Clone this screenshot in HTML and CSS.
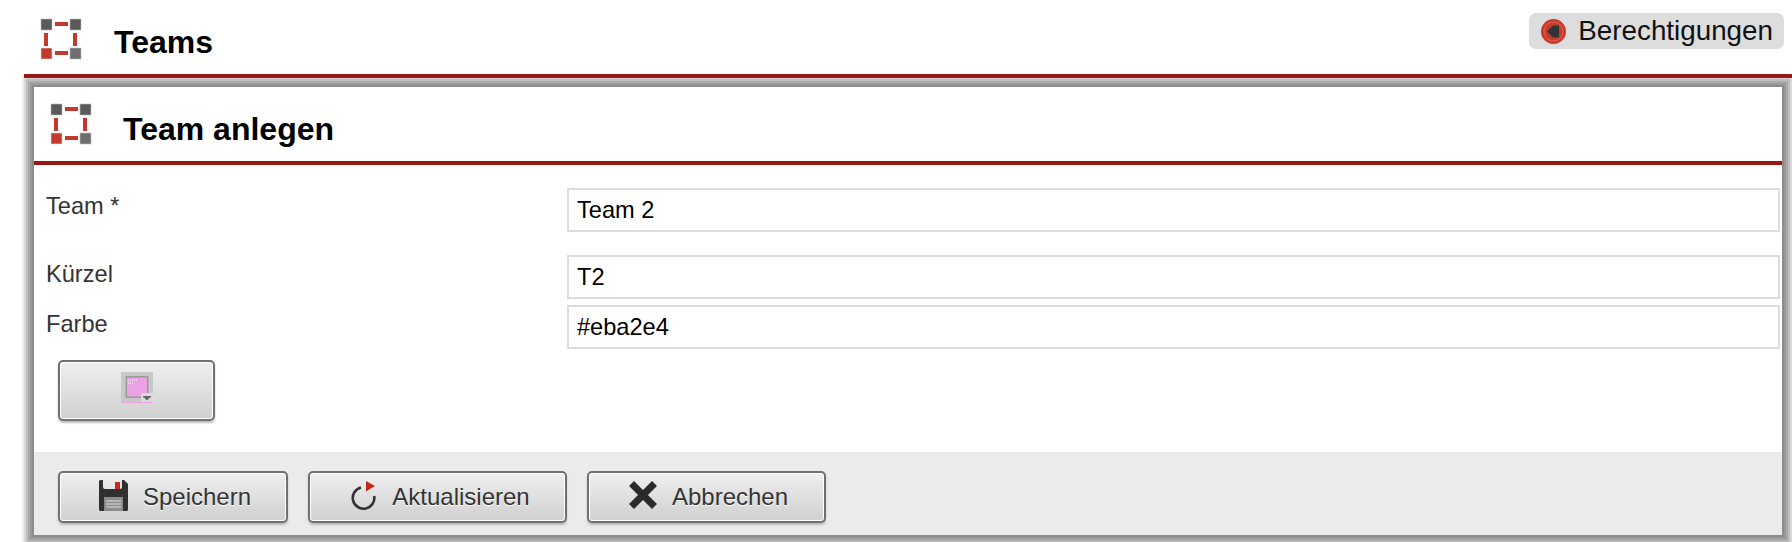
FILE: index.html
```html
<!DOCTYPE html>
<html lang="de">
<head>
    <meta charset="UTF-8">
    <meta name="viewport" content="width=device-width, initial-scale=1.0">
    <title>Teams</title>
    <link rel="stylesheet" href="styles.css">
</head>
<body>

    <svg class="defs" width="0" height="0">
        <symbol id="team-icon" viewBox="0 0 42 42">
            <rect x="1" y="1" width="11" height="11" fill="#5a5a5a" stroke="#bbb" stroke-width="0.6"/>
            <rect x="15" y="4" width="13" height="4" fill="#c4392b"/>
            <rect x="30" y="1" width="11" height="11" fill="#5a5a5a" stroke="#bbb" stroke-width="0.6"/>
            <rect x="4" y="15" width="4" height="13" fill="#c4392b"/>
            <rect x="33" y="15" width="4" height="13" fill="#c4392b"/>
            <rect x="1" y="30" width="11" height="11" fill="#c4392b" stroke="#ddd" stroke-width="0.6"/>
            <rect x="15" y="33" width="13" height="4" fill="#c4392b"/>
            <rect x="30" y="30" width="11" height="11" fill="#6e6e6e" stroke="#bbb" stroke-width="0.6"/>
        </symbol>
    </svg>

    <header class="page-head">
        <div class="page-title">
            <svg class="team-icon"><use href="#team-icon"/></svg>
            <h1>Teams</h1>
        </div>
        <a class="perm-link" href="#">
            <svg class="perm-icon" viewBox="0 0 25 25">
                <circle cx="12.5" cy="12.5" r="12.5" fill="#c93a2b"/>
                <circle cx="12.5" cy="12.5" r="9.5" fill="none" stroke="#e0705f" stroke-width="0.8"/>
                <path d="M6 12.5 L12 6.5 H18 V18.5 H12 Z" fill="#333"/>
            </svg>
            Berechtigungen
        </a>
    </header>

    <section class="panel">
        <div class="panel-head">
            <svg class="team-icon"><use href="#team-icon"/></svg>
            <h2>Team anlegen</h2>
        </div>

        <form class="form-body">
            <div class="row row-team">
                <label for="team">Team *</label>
                <input id="team" type="text" value="Team 2">
            </div>
            <div class="row row-short">
                <label for="kuerzel">Kürzel</label>
                <input id="kuerzel" type="text" value="T2">
            </div>
            <div class="row row-color">
                <label for="farbe">Farbe</label>
                <input id="farbe" type="text" value="#eba2e4">
            </div>
            <button class="btn btn-color" type="button" aria-label="Farbe wählen">
                <svg class="color-icon" width="32" height="32" viewBox="0 0 32 32">
                    <rect y="30" width="32" height="1" fill="#eba2e4"/>
                    <rect width="32" height="30" fill="#c8c8c8"/>
                    <rect x="4.5" y="4" width="23" height="22" fill="#9a9a9a"/>
                    <rect x="6" y="5.5" width="20" height="19" fill="#eba2e4"/>
                    <path d="M7 8 H17 M7 11 H12" stroke="#fff" stroke-width="1" stroke-dasharray="1 1"/>
                    <path d="M20 30 V24 Q20 21 23 21 H32 V30 Z" fill="#dcdcdc"/>
                    <path d="M22 24 H30 V25.5 H29 L26 28.5 L23 25.5 H22 Z" fill="#666"/>
                </svg>
            </button>
        </form>

        <div class="panel-foot">
            <button class="btn btn-save" type="button">
                <svg class="btn-icon" width="29" height="31" viewBox="0 0 29 31">
                    <path d="M1.5 0 H4 V7 Q4 9 6 9 H21 Q23 9 23 7 V0 H25 L29 4 V29.5 Q29 31 27.5 31 H1.5 Q0 31 0 29.5 V1.5 Q0 0 1.5 0 Z" fill="#303030"/>
                    <rect x="16" y="2" width="5" height="7" fill="#c4291c"/>
                    <rect x="5" y="17" width="19" height="14" fill="#8c8c8c"/>
                    <path d="M7 21 H22 M7 24 H22 M7 27 H22" stroke="#ddd" stroke-width="1.2"/>
                </svg>
                Speichern
            </button>
            <button class="btn btn-refresh" type="button">
                <svg class="btn-icon" width="25" height="29" viewBox="0 0 25 29">
                    <path d="M10 6.4 A10.8 10.8 0 1 0 23.2 15" fill="none" stroke="#333" stroke-width="2.6"/>
                    <path d="M15 0 L24 5 L15 10.5 Z" fill="#c4291c"/>
                </svg>
                Aktualisieren
            </button>
            <button class="btn btn-cancel" type="button">
                <svg class="btn-icon" width="30" height="30" viewBox="0 0 30 30">
                    <path d="M3.5 3.5 L26.5 26.5 M26.5 3.5 L3.5 26.5" stroke="#2b2b2b" stroke-width="7"/>
                </svg>
                Abbrechen
            </button>
        </div>
    </section>

</body>
</html>
```

FILE: styles.css
```css
html, body {
    margin: 0;
    height: 100%;
    overflow: hidden;
}

body {
    background: #fff;
    color: #000;
    font-family: "Liberation Sans", Arial, sans-serif;
}

.defs {
    display: block;
    height: 0;
}

.team-icon {
    display: block;
    width: 42px;
    height: 42px;
    flex: none;
}

.page-head {
    position: relative;
    display: flex;
    justify-content: space-between;
    align-items: flex-start;
    height: 78px;
    margin-left: 24px;
    padding: 13px 8px 0 16px;
    box-sizing: border-box;
    border-bottom: 4px solid #981815;
}

.page-title {
    display: flex;
    align-items: center;
    gap: 32px;
    padding-top: 3px;
}

.page-title h1 {
    margin: 8px 0 0;
    font-size: 32px;
    font-weight: bold;
}

.perm-link {
    display: flex;
    align-items: center;
    gap: 12px;
    height: 36px;
    padding: 0 11px 0 12px;
    background: #ddd;
    border-radius: 7px;
    color: #111;
    font-size: 27.8px;
    text-decoration: none;
}

.perm-icon {
    width: 25px;
    height: 25px;
}

.panel {
    display: flex;
    flex-direction: column;
    height: 448px;
    margin: 9px 10px 0 34px;
    background: #fff;
    overflow: hidden;
    box-shadow: 0 0 0 2px #8c8c8c, 0 0 0 4px #999, 0 0 0 6px #aaa, 0 0 0 8px #bfbfbf, 0 0 0 10px #d8d8d8, 0 0 0 12px #eee;
}

.panel-head {
    display: flex;
    align-items: center;
    gap: 31px;
    flex: none;
    height: 74px;
    padding-left: 16px;
    border-bottom: 4px solid #981815;
}

.panel-head h2 {
    margin: 10px 0 0;
    font-size: 32px;
    font-weight: bold;
}

.form-body {
    flex: 1;
}

.row {
    display: grid;
    grid-template-columns: 533px 1fr;
    padding-right: 2px;
}

.row label {
    padding-left: 12px;
    font-size: 23.6px;
    line-height: 26px;
    color: #333;
}

.row input {
    width: 100%;
    height: 44px;
    box-sizing: border-box;
    border: 2px solid #ddd;
    padding: 0 8px;
    font-family: inherit;
    font-size: 23.6px;
    color: #000;
    outline: none;
}

.row-team {
    padding-top: 23px;
}

.row-team label {
    padding-top: 5px;
}

.row-short {
    padding-top: 23px;
}

.row-short label {
    padding-top: 6px;
}

.row-color {
    padding-top: 6px;
}

.row-color label {
    padding-top: 6px;
}

.btn {
    display: inline-flex;
    align-items: center;
    justify-content: center;
    box-sizing: border-box;
    height: 52px;
    padding: 0;
    border: 2px solid #707070;
    border-radius: 5px;
    background: linear-gradient(#efefef, #d0d0d0);
    box-shadow: inset 0 0 0 1px #fff, 0 2px 2px #bbb;
    color: #333;
    font-family: inherit;
    font-size: 24px;
    text-shadow: 0 1px 0 #fff;
    cursor: pointer;
}

.btn-icon {
    margin-bottom: 4px;
}

.color-icon {
    margin-bottom: 6px;
}

.btn-color {
    display: flex;
    width: 157px;
    height: 61px;
    margin: 11px 0 0 24px;
}

.panel-foot {
    display: flex;
    gap: 20px;
    flex: none;
    height: 83px;
    padding: 19px 0 0 24px;
    box-sizing: border-box;
    background: #ebebeb;
}

.btn-save {
    width: 230px;
    padding-left: 4px;
    gap: 15px;
}

.btn-refresh {
    width: 259px;
    padding-left: 6px;
    gap: 16px;
}

.btn-cancel {
    width: 239px;
    padding-left: 3px;
    gap: 14px;
}
```
